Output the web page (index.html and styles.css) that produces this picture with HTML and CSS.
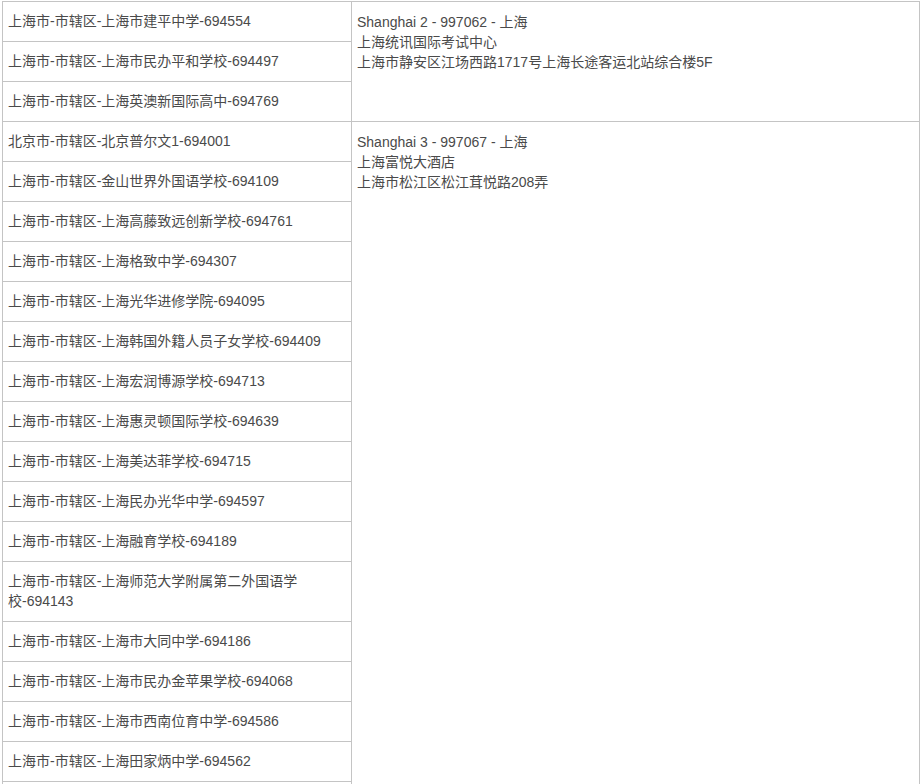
FILE: index.html
```html
<!DOCTYPE html>
<html lang="zh-CN">
<head>
<meta charset="utf-8">
<title>考点列表</title>
<link rel="stylesheet" href="styles.css">
</head>
<body>
<table class="sites">
  <colgroup>
    <col class="col-school">
    <col class="col-center">
  </colgroup>
  <tbody>
    <tr>
      <td class="school">上海市-市辖区-上海市建平中学-694554</td>
      <td class="center" rowspan="3">Shanghai 2 - 997062 - 上海<br>上海统讯国际考试中心<br>上海市静安区江场西路1717号上海长途客运北站综合楼5F</td>
    </tr>
    <tr><td class="school">上海市-市辖区-上海市民办平和学校-694497</td></tr>
    <tr><td class="school">上海市-市辖区-上海英澳新国际高中-694769</td></tr>
    <tr>
      <td class="school">北京市-市辖区-北京普尔文1-694001</td>
      <td class="center" rowspan="17">Shanghai 3 - 997067 - 上海<br>上海富悦大酒店<br>上海市松江区松江茸悦路208弄</td>
    </tr>
    <tr><td class="school">上海市-市辖区-金山世界外国语学校-694109</td></tr>
    <tr><td class="school">上海市-市辖区-上海高藤致远创新学校-694761</td></tr>
    <tr><td class="school">上海市-市辖区-上海格致中学-694307</td></tr>
    <tr><td class="school">上海市-市辖区-上海光华进修学院-694095</td></tr>
    <tr><td class="school">上海市-市辖区-上海韩国外籍人员子女学校-694409</td></tr>
    <tr><td class="school">上海市-市辖区-上海宏润博源学校-694713</td></tr>
    <tr><td class="school">上海市-市辖区-上海惠灵顿国际学校-694639</td></tr>
    <tr><td class="school">上海市-市辖区-上海美达菲学校-694715</td></tr>
    <tr><td class="school">上海市-市辖区-上海民办光华中学-694597</td></tr>
    <tr><td class="school">上海市-市辖区-上海融育学校-694189</td></tr>
    <tr><td class="school">上海市-市辖区-上海师范大学附属第二外国语学校-694143</td></tr>
    <tr><td class="school">上海市-市辖区-上海市大同中学-694186</td></tr>
    <tr><td class="school">上海市-市辖区-上海市民办金苹果学校-694068</td></tr>
    <tr><td class="school">上海市-市辖区-上海市西南位育中学-694586</td></tr>
    <tr><td class="school">上海市-市辖区-上海田家炳中学-694562</td></tr>
    <tr><td class="school">&nbsp;</td></tr>
  </tbody>
</table>
</body>
</html>
```

FILE: styles.css
```css
html, body {
  margin: 0;
  padding: 0;
  background: #ffffff;
}

body {
  padding: 1px 0 0 2px;
  font-family: "Liberation Sans", "Noto Sans CJK SC", sans-serif;
  font-size: 14px;
  line-height: 20px;
  color: #4a4a4a;
}

.sites {
  border-collapse: collapse;
  table-layout: fixed;
  width: 918px;
}

.col-school {
  width: 349px;
}

.sites td {
  border: 1px solid #c4c4c4;
  padding: 9px 6px 10px 5px;
  vertical-align: middle;
  text-align: left;
}

.sites td.center {
  vertical-align: top;
  padding-top: 10px;
  padding-left: 5px;
}
```
